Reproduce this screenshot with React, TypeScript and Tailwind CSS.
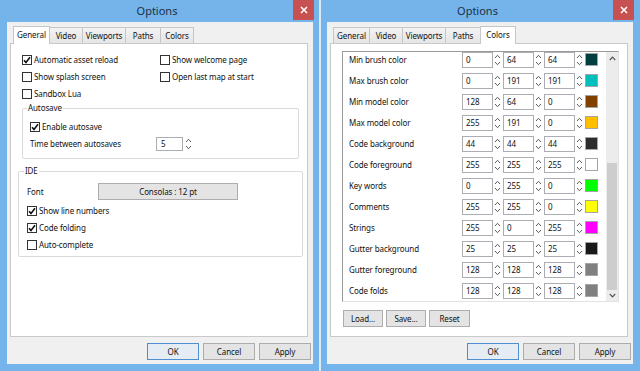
import React from "react";

type Tab = { name: string; w: number };

function CheckBox({ checked, label }: { checked?: boolean; label: string }) {
  return (
    <div className="flex h-[17px] items-center gap-[2px]">
      <span className="flex h-[10px] w-[10px] shrink-0 items-center justify-center border border-[#333333] bg-white">
        {checked && (
          <svg width="8" height="8" viewBox="0 0 8 8">
            <path d="M1 4.2 L3 6.4 L7 1.3" fill="none" stroke="#111" strokeWidth="1.6" />
          </svg>
        )}
      </span>
      <span className="whitespace-nowrap">{label}</span>
    </div>
  );
}

function SpinArrows({ extra = "" }: { extra?: string }) {
  return (
    <svg className={extra} width="7" height="16" viewBox="0 0 7 16">
      <path d="M1 6 L3.5 3.3 L6 6" fill="none" stroke="#5a5a5a" strokeWidth="1" />
      <path d="M1 10 L3.5 12.7 L6 10" fill="none" stroke="#5a5a5a" strokeWidth="1" />
    </svg>
  );
}

function Btn({ label, w, def }: { label: string; w: string; def?: boolean }) {
  return (
    <div
      className={
        "flex h-[17px] items-center justify-center border " +
        w +
        (def ? " border-[#4d8fd1] bg-[#e5ecf3]" : " border-[#adadad] bg-[#e4e4e4]")
      }
    >
      {label}
    </div>
  );
}

function Window({
  tabs,
  selected,
  children,
  side,
}: {
  tabs: Tab[];
  selected: string;
  children: React.ReactNode;
  side: "left" | "right";
}) {
  return (
    <div
      className={
        "flex h-[371px] w-[319px] flex-col bg-[#74b4ea] " +
        (side === "left" ? "pl-[7px] pr-[6px]" : "pl-[6px] pr-[7px]")
      }
    >
      <div
        className={
          "grid h-[22px] grid-cols-[1fr_auto_1fr] " +
          (side === "left" ? "-ml-[7px] -mr-[6px] pr-[5px]" : "-ml-[6px] -mr-[7px] pr-[6px]")
        }
      >
        <div />
        <div className="self-center pb-[1px] text-[11px] leading-[14px] tracking-normal text-[#1c2f48]">Options</div>
        <div className="flex h-[20px] w-[21px] items-center justify-center self-start justify-self-end bg-[#c75050]">
          <svg width="8" height="8" viewBox="0 0 8 8">
            <path d="M1 1 L7 7 M7 1 L1 7" stroke="#ffffff" strokeWidth="1.6" />
          </svg>
        </div>
      </div>
      <div className="flex h-[342px] flex-col bg-[#f0f0f0] pt-[4px]">
        <div className="ml-[6px] flex h-[17px] items-end">
          {tabs.map((t, i) => {
            const sel = t.name === selected;
            return (
              <div
                key={t.name}
                style={{ width: t.w }}
                className={
                  "flex items-center justify-center border-x border-t border-[#c6c6c6] " +
                  (i > 0 ? "-ml-[1px] " : "") +
                  (sel
                    ? "relative z-10 -mb-[1px] h-[18px] bg-white pb-[1px]"
                    : "h-[16px] bg-gradient-to-b from-[#f3f3f3] to-[#e5e5e5]")
                }
              >
                {t.name}
              </div>
            );
          })}
        </div>
        <div className="ml-[3px] h-[294px] w-[298px] border border-[#c9c9c9] bg-white">{children}</div>
        <div className="mt-[6px] flex justify-end gap-[4px] pr-[2px]">
          <Btn label="OK" w="w-[52px]" def />
          <Btn label="Cancel" w="w-[52px]" />
          <Btn label="Apply" w="w-[52px]" />
        </div>
      </div>
    </div>
  );
}

function GeneralPanel() {
  return (
    <div className="flex flex-col pt-[7px]">
      <div className="grid grid-cols-[138px_1fr] pl-[11px]">
        <CheckBox checked label="Automatic asset reload" />
        <CheckBox label="Show welcome page" />
        <CheckBox label="Show splash screen" />
        <CheckBox label="Open last map at start" />
        <CheckBox label="Sandbox Lua" />
      </div>
      <fieldset className="ml-[11px] w-[277px] rounded-[2px] border border-[#dadada]">
        <legend className="ml-[4px] px-[1px] leading-[12px]">Autosave</legend>
        <div className="flex flex-col pb-[6px] pl-[7px] pt-[4px]">
          <CheckBox checked label="Enable autosave" />
          <div className="flex h-[17px] items-center">
            <span className="w-[126px] whitespace-nowrap">Time between autosaves</span>
            <div className="flex h-[14px] w-[27px] items-center border border-[#abadb3] bg-white pl-[4px]">5</div>
            <SpinArrows extra="ml-[2px]" />
          </div>
        </div>
      </fieldset>
      <fieldset className="ml-[7px] mt-[6px] w-[285px] rounded-[2px] border border-[#dadada]">
        <legend className="ml-[5px] px-[1px] leading-[12px]">IDE</legend>
        <div className="flex flex-col pb-[3px] pl-[8px] pt-[6px]">
          <div className="flex h-[17px] items-center">
            <span className="w-[71px]">Font</span>
            <Btn label="Consolas : 12 pt" w="w-[140px]" />
          </div>
          <div className="mt-[2px] flex flex-col">
            <CheckBox checked label="Show line numbers" />
            <CheckBox checked label="Code folding" />
            <CheckBox label="Auto-complete" />
          </div>
        </div>
      </fieldset>
    </div>
  );
}

const colorRows: { name: string; rgb: [number, number, number] }[] = [
  { name: "Min brush color", rgb: [0, 64, 64] },
  { name: "Max brush color", rgb: [0, 191, 191] },
  { name: "Min model color", rgb: [128, 64, 0] },
  { name: "Max model color", rgb: [255, 191, 0] },
  { name: "Code background", rgb: [44, 44, 44] },
  { name: "Code foreground", rgb: [255, 255, 255] },
  { name: "Key words", rgb: [0, 255, 0] },
  { name: "Comments", rgb: [255, 255, 0] },
  { name: "Strings", rgb: [255, 0, 255] },
  { name: "Gutter background", rgb: [25, 25, 25] },
  { name: "Gutter foreground", rgb: [128, 128, 128] },
  { name: "Code folds", rgb: [128, 128, 128] },
];

function Spin({ v, first }: { v: number; first?: boolean }) {
  return (
    <>
      <div
        className={
          "flex h-[16px] w-[31px] items-center border border-[#abadb3] bg-white pl-[3px] " +
          (first ? "" : "ml-[2px]")
        }
      >
        {v}
      </div>
      <SpinArrows extra="ml-[1px]" />
    </>
  );
}

function ColorsPanel() {
  return (
    <div className="flex flex-col pl-[11px] pt-[7px]">
      <div className="flex h-[251px] w-[277px] border border-[#9a9a9a] border-b-[#e2e2e2] border-r-[#e2e2e2]">
        <div className="flex-1 overflow-hidden">
          <div className="-mt-[3px] flex flex-col pl-[6px]">
            {colorRows.map((r) => (
              <div key={r.name} className="flex h-[21px] items-center">
                <span className="w-[113px] whitespace-nowrap">{r.name}</span>
                <Spin v={r.rgb[0]} first />
                <Spin v={r.rgb[1]} />
                <Spin v={r.rgb[2]} />
                <div
                  className="ml-[2px] h-[13px] w-[13px] border border-[#a5a5a5]"
                  style={{ backgroundColor: `rgb(${r.rgb[0]},${r.rgb[1]},${r.rgb[2]})` }}
                />
              </div>
            ))}
          </div>
        </div>
        <div className="flex w-[12px] flex-col bg-[#ececec]">
          <div className="flex h-[13px] items-center justify-center">
            <svg width="7" height="5" viewBox="0 0 7 5">
              <path d="M0.8 4 L3.5 1.2 L6.2 4" fill="none" stroke="#555" strokeWidth="1.2" />
            </svg>
          </div>
          <div className="flex-1" />
          <div className="mx-[1px] h-[127px] bg-[#cdcdcd]" />
          <div className="flex h-[11px] items-center justify-center">
            <svg width="7" height="5" viewBox="0 0 7 5">
              <path d="M0.8 1 L3.5 3.8 L6.2 1" fill="none" stroke="#555" strokeWidth="1.2" />
            </svg>
          </div>
        </div>
      </div>
      <div className="ml-[1px] mt-[8px] flex gap-[3px]">
        <Btn label="Load..." w="w-[40px]" />
        <Btn label="Save..." w="w-[40px]" />
        <Btn label="Reset" w="w-[41px]" />
      </div>
    </div>
  );
}

const leftTabs: Tab[] = [
  { name: "General", w: 37 },
  { name: "Video", w: 34 },
  { name: "Viewports", w: 44 },
  { name: "Paths", w: 36 },
  { name: "Colors", w: 34 },
];
const rightTabs: Tab[] = [
  { name: "General", w: 37 },
  { name: "Video", w: 34 },
  { name: "Viewports", w: 44 },
  { name: "Paths", w: 36 },
  { name: "Colors", w: 36 },
];

export default function App() {
  return (
    <div className="flex h-[371px] w-[640px] gap-[2px] overflow-hidden bg-[#dce9f6] font-['Noto_Sans',sans-serif] text-[8px] leading-[12px] tracking-[-0.1px] text-[#111]">
      <Window tabs={leftTabs} selected="General" side="left">
        <GeneralPanel />
      </Window>
      <Window tabs={rightTabs} selected="Colors" side="right">
        <ColorsPanel />
      </Window>
    </div>
  );
}
